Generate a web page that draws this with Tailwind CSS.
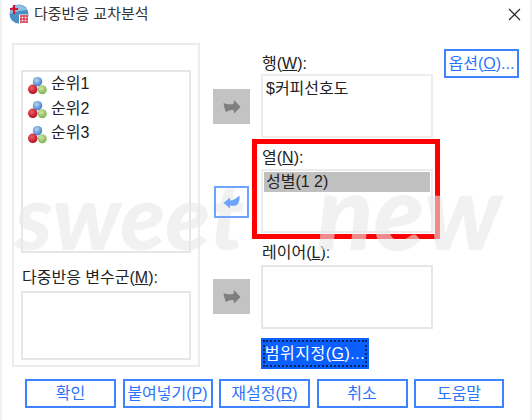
<!DOCTYPE html>
<html lang="ko">
<head>
  <meta charset="UTF-8">
  <title>다중반응 교차분석</title>
  <script src="https://cdn.jsdelivr.net/npm/@tailwindcss/browser@4"></script>
</head>
<body class="w-[532px] h-[420px] overflow-hidden bg-white">
  <svg width="0" height="0" class="absolute">
    <defs>
      <radialGradient id="ballBlue" cx="40%" cy="35%" r="65%"><stop offset="0" stop-color="#b5d4f5"/><stop offset="1" stop-color="#3f80c8"/></radialGradient>
      <radialGradient id="ballRed" cx="40%" cy="35%" r="65%"><stop offset="0" stop-color="#f0606a"/><stop offset="1" stop-color="#b80f20"/></radialGradient>
      <radialGradient id="ballGreen" cx="40%" cy="35%" r="65%"><stop offset="0" stop-color="#cfe6a8"/><stop offset="1" stop-color="#7fb04e"/></radialGradient>
      <symbol id="balls" viewBox="0 0 20 20">
        <circle cx="10" cy="6" r="5" fill="url(#ballBlue)"/>
        <circle cx="5" cy="14" r="5" fill="url(#ballRed)"/>
        <circle cx="15" cy="14.5" r="4.7" fill="url(#ballGreen)"/>
      </symbol>
      <symbol id="arrowRight" viewBox="0 0 18 14">
        <path d="M11 0 L17.5 7 L11 13.5 L10.5 10 C7 9.5 4.5 11 3 12 C1.5 9 1 6 0.5 3 C3 4.5 7 4.5 10.5 4 Z"/>
      </symbol>
    </defs>
  </svg>

  <div class="relative w-full h-full flex flex-col border-x-2 border-[#f1f1f1] font-['Liberation_Sans','Noto_Sans_CJK_KR',sans-serif] text-[16px] leading-[20px] text-[#222]">
    <!-- Title bar -->
    <div class="h-[28px] flex items-center pl-[7px] pr-[9px]">
      <svg width="20" height="20" viewBox="0 0 20 20" class="shrink-0">
        <circle cx="10" cy="10" r="9.5" fill="#4a8fc4"/>
        <path d="M1 10 a9 9 0 0 1 17 -4 l-8 1z" fill="#8fc0e2"/>
        <path d="M5 1 v9 M1 5 h8" stroke="#d8152a" stroke-width="2.2"/>
        <rect x="10" y="10.5" width="9" height="9" fill="#fff"/>
        <path d="M11 12h8M11 15h8M11 18h8M12 11v8M15 11v8M18 11v8" stroke="#d9445a" stroke-width="1.4"/>
      </svg>
      <span class="ml-[5px] text-[15px] text-[#333]">다중반응 교차분석</span>
      <svg width="13" height="13" viewBox="0 0 13 13" class="ml-auto" fill="none" stroke="#222" stroke-width="1.1"><path d="M1 1l11 11M12 1L1 12"/></svg>
    </div>

    <!-- Main area -->
    <div class="flex pl-[10px] pt-[15px] h-[351px]">
      <!-- Variables panel -->
      <div class="w-[188px] h-[324px] border-2 border-[#ececec] flex flex-col px-[7px] pt-[25px]">
        <ul class="h-[183px] border-2 border-[#e6e6e6] pl-[5px]">
          <li class="flex items-center h-[24.5px] gap-[4px]"><svg width="19" height="19" class="mt-[2px]"><use href="#balls"/></svg>순위1</li>
          <li class="flex items-center h-[24.5px] gap-[4px]"><svg width="19" height="19" class="mt-[2px]"><use href="#balls"/></svg>순위2</li>
          <li class="flex items-center h-[24.5px] gap-[4px]"><svg width="19" height="19" class="mt-[2px]"><use href="#balls"/></svg>순위3</li>
        </ul>
        <div class="mt-[15px] ml-[1px] h-[23px]">다중반응 변수군(<span class="underline">M</span>):</div>
        <div class="h-[69px] border-2 border-[#e6e6e6]"></div>
      </div>

      <!-- Transfer buttons -->
      <div class="w-[37px] ml-[13px] flex flex-col items-center pt-[46px]">
        <button class="w-[37px] h-[35px] bg-[#c3c3c3] flex items-center justify-center"><svg width="18" height="14" fill="#7f7f7f"><use href="#arrowRight"/></svg></button>
        <button class="relative z-10 w-[35px] h-[32px] mt-[62px] border-2 border-[#6ea3ff] flex items-center justify-center">
          <svg width="18" height="14" viewBox="0 0 18 14" fill="#6ea3ff"><path d="M0.5 8 L7 2.5 V5.5 C10 5.5 12.5 4 16.5 0.5 C17 5 16 8 14 10 C12 11 9 11 7 10.5 V13.5 Z"/></svg>
        </button>
        <button class="w-[37px] h-[35px] mt-[61px] bg-[#c3c3c3] flex items-center justify-center"><svg width="18" height="14" fill="#7f7f7f"><use href="#arrowRight"/></svg></button>
      </div>

      <!-- Target lists -->
      <div class="w-[172px] ml-[11px] flex flex-col pt-[11px]">
        <div class="h-[20px] ml-[1px]">행(<span class="underline">W</span>):</div>
        <div class="h-[64px] border-2 border-[#ececec] px-[3px] pt-[3px]">$커피선호도</div>
        <div class="mt-[14px] h-[12px] ml-[1px] leading-[12px]">열(<span class="underline">N</span>):</div>
        <div class="mt-[5px] h-[64px] border-2 border-[#ececec] p-[1px]">
          <div class="h-[20px] bg-[#c0c0c0] pl-[2px]">성별(1 2)</div>
        </div>
        <div class="mt-[10px] h-[22px] ml-[1px]">레이어(<span class="underline">L</span>):</div>
        <div class="h-[64px] border-2 border-[#e6e6e6]"></div>
        <button class="mt-[9px] w-[108px] h-[31px] bg-[#0a5fff] p-[2px] text-white">
          <span class="flex items-center justify-center h-full border-2 border-dotted border-[#06245f] tracking-[0.5px] whitespace-nowrap">범위지정(<span class="underline">G</span>)...</span>
        </button>
      </div>

      <!-- Options -->
      <div class="ml-[11px] pt-[6px]">
        <button class="w-[75px] h-[29px] border-2 border-[#3d83ff] text-[#2a73ff] whitespace-nowrap">옵션(<span class="underline">O</span>)...</button>
      </div>
    </div>

    <!-- Footer buttons -->
    <div class="flex gap-[6.5px] pl-[23px] text-[#2a73ff]">
      <button class="w-[91px] h-[29px] border-2 border-[#3d83ff]">확인</button>
      <button class="w-[90px] h-[29px] border-2 border-[#3d83ff]">붙여넣기(<span class="underline">P</span>)</button>
      <button class="w-[91px] h-[29px] border-2 border-[#3d83ff]">재설정(<span class="underline">R</span>)</button>
      <button class="w-[91px] h-[29px] border-2 border-[#3d83ff]">취소</button>
      <button class="w-[90px] h-[29px] border-2 border-[#3d83ff]">도움말</button>
    </div>

    <!-- Red annotation box -->
    <div class="absolute left-[250px] top-[139px] w-[188px] h-[100px] border-[5px] border-[#ff0000] pointer-events-none"></div>

    <!-- Watermark -->
    <div class="absolute left-[13px] top-[160px] w-[487px] flex items-baseline justify-between text-[92px] leading-[100px] font-black italic text-[#e8e8e8]/60 font-['Lato',sans-serif] pointer-events-none whitespace-nowrap">
      <span>sweet</span><span class="text-[104px]">new</span>
    </div>
  </div>
</body>
</html>
